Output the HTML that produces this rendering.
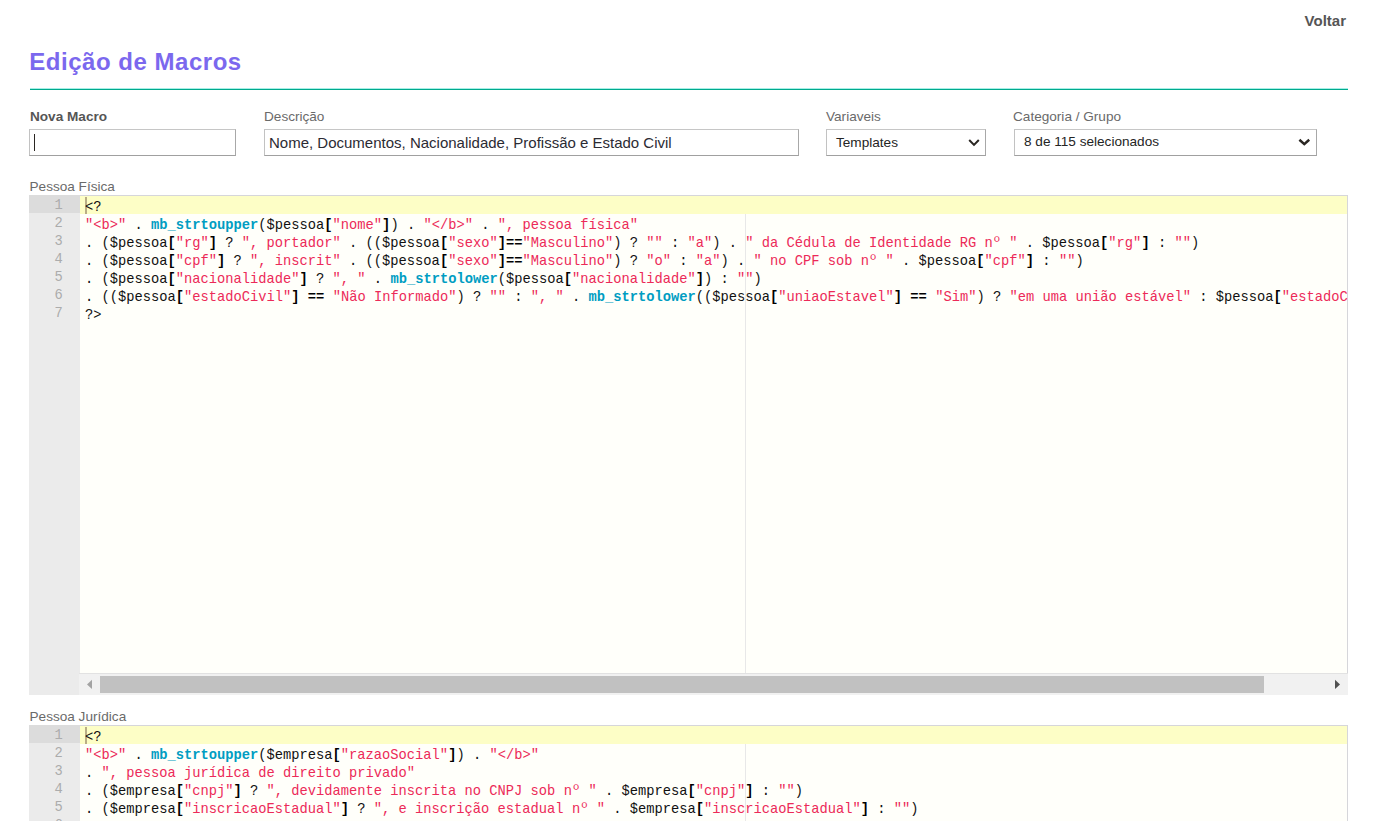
<!DOCTYPE html>
<html lang="pt-br">
<head>
<meta charset="utf-8">
<title>Edição de Macros</title>
<style>
*{box-sizing:border-box;margin:0;padding:0}
html,body{width:1378px;height:821px;overflow:hidden;background:#fff}
body{position:relative;font-family:"Liberation Sans",sans-serif;color:#666}
.abs{position:absolute;white-space:nowrap}
#voltar{right:32px;top:12px;font-size:15px;line-height:18px;font-weight:bold;color:#555}
#title{left:29.3px;top:47px;font-size:24px;letter-spacing:.52px;line-height:30px;font-weight:bold;color:#7b68ee}
#rule1{left:30px;top:88px;width:1318px;height:1px;background:#a6efe7}
#rule2{left:30px;top:89px;width:1318px;height:1px;background:#00aa8d}
.lbl{font-size:13.6px;line-height:16px;color:#6a6a6a}
.lbl.b{font-weight:bold;color:#555}
.inp{top:129px;height:27px;border:1px solid;border-color:#c6c6c6 #a8a8a8 #a0a0a0 #c2c2c2;background:#fff;color:#2b2b33}
.inp span{position:absolute;white-space:nowrap}
.chev{position:absolute}
/* editor */
.ed{left:29px;width:1319px;height:500px;background:#fffffa;overflow:hidden;
 font-family:"Liberation Mono",monospace;font-size:13.75px;line-height:18px;color:#111}
.gut{position:absolute;left:0;top:0;width:51px;height:100%;background:#ebebeb;color:#acacac;text-align:right;padding-top:2px}
.gut div{height:18px;padding-right:17.25px;position:relative}
.gact{position:absolute;left:0;top:0;width:51px;height:18px;background:#dcdcdc}
.bt{position:absolute;left:51px;right:0;top:0;height:1px;background:#d6d6da}
.br{position:absolute;right:0;top:0;width:1px;height:100%;background:#d6d6da}
.actl{position:absolute;left:51px;right:1px;top:1px;height:18px;background:#fdfec6}
.pm{position:absolute;left:716px;top:19px;width:1px;height:100%;background:#e8e8e8}
.cur{position:absolute;left:56px;top:2px;width:2px;height:17px;background:#b9ae86}
.code{position:absolute;left:56px;top:4px;white-space:pre}
.code div{height:18px}
.s{color:#ec2a58}
.f{color:#009dc2;font-weight:bold}
.k{font-weight:bold;color:#000}
.hs{position:absolute;left:50px;right:0;bottom:0;height:22px;background:#f1f1f1;border-top:1px solid #e2e2e2}
.hs .th{position:absolute;left:21px;top:2px;height:17px;width:1164px;background:#c1c1c1}
.hs svg{position:absolute;top:0}
</style>
</head>
<body>
<div class="abs" id="voltar">Voltar</div>
<div class="abs" id="title">Edição de Macros</div>
<div class="abs" id="rule1"></div>
<div class="abs" id="rule2"></div>

<div class="abs lbl b" style="left:30px;top:109px">Nova Macro</div>
<div class="abs lbl" style="left:264px;top:109px">Descrição</div>
<div class="abs lbl" style="left:826px;top:109px">Variaveis</div>
<div class="abs lbl" style="left:1013px;top:109px">Categoria / Grupo</div>

<div class="abs inp" style="left:29px;width:207px"><span style="left:4px;top:4px;width:1px;height:17px;background:#2a2622"></span></div>
<div class="abs inp" style="left:264px;width:535px"><span style="left:4px;top:3px;font-size:15px;line-height:20px">Nome, Documentos, Nacionalidade, Profissão e Estado Civil</span></div>
<div class="abs inp" style="left:826px;width:160px"><span style="left:9px;top:4px;font-size:13.6px;line-height:17px;color:#242424">Templates</span>
 <svg class="chev" style="left:141px;top:8px" width="14" height="10" viewBox="0 0 14 10"><path d="M1.2 2 L6 6.9 L10.8 2" fill="none" stroke="#2a2622" stroke-width="2"/></svg></div>
<div class="abs inp" style="left:1014px;width:303px"><span style="left:9px;top:3px;font-size:13.6px;line-height:17px;color:#242424">8 de 115 selecionados</span>
 <svg class="chev" style="left:283px;top:8px" width="14" height="10" viewBox="0 0 14 10"><path d="M1.4 1.7 L6.3 6.1 L11.2 1.7" fill="none" stroke="#2a2622" stroke-width="2.5"/></svg></div>

<div class="abs lbl" style="left:29.5px;top:179px">Pessoa Física</div>
<div class="abs ed" style="top:195px">
 <div class="gut"><i class="gact"></i><div>1</div><div>2</div><div>3</div><div>4</div><div>5</div><div>6</div><div>7</div></div>
 <div class="pm"></div><div class="bt"></div><div class="br"></div>
 <div class="actl"></div>
 <div class="cur"></div>
 <div class="code"><div>&lt;?</div><div><span class="s">"&lt;b&gt;"</span> . <span class="f">mb_strtoupper</span>($pessoa<span class="k">[</span><span class="s">"nome"</span><span class="k">]</span>) . <span class="s">"&lt;/b&gt;"</span> . <span class="s">", pessoa física"</span></div><div>. ($pessoa<span class="k">[</span><span class="s">"rg"</span><span class="k">]</span> ? <span class="s">", portador"</span> . (($pessoa<span class="k">[</span><span class="s">"sexo"</span><span class="k">]==</span><span class="s">"Masculino"</span>) ? <span class="s">""</span> : <span class="s">"a"</span>) . <span class="s">" da Cédula de Identidade RG nº "</span> . $pessoa<span class="k">[</span><span class="s">"rg"</span><span class="k">]</span> : <span class="s">""</span>)</div><div>. ($pessoa<span class="k">[</span><span class="s">"cpf"</span><span class="k">]</span> ? <span class="s">", inscrit"</span> . (($pessoa<span class="k">[</span><span class="s">"sexo"</span><span class="k">]==</span><span class="s">"Masculino"</span>) ? <span class="s">"o"</span> : <span class="s">"a"</span>) . <span class="s">" no CPF sob nº "</span> . $pessoa<span class="k">[</span><span class="s">"cpf"</span><span class="k">]</span> : <span class="s">""</span>)</div><div>. ($pessoa<span class="k">[</span><span class="s">"nacionalidade"</span><span class="k">]</span> ? <span class="s">", "</span> . <span class="f">mb_strtolower</span>($pessoa<span class="k">[</span><span class="s">"nacionalidade"</span><span class="k">]</span>) : <span class="s">""</span>)</div><div>. (($pessoa<span class="k">[</span><span class="s">"estadoCivil"</span><span class="k">]</span> <span class="k">==</span> <span class="s">"Não Informado"</span>) ? <span class="s">""</span> : <span class="s">", "</span> . <span class="f">mb_strtolower</span>(($pessoa<span class="k">[</span><span class="s">"uniaoEstavel"</span><span class="k">]</span> <span class="k">==</span> <span class="s">"Sim"</span>) ? <span class="s">"em uma união estável"</span> : $pessoa<span class="k">[</span><span class="s">"estadoCivil"</span><span class="k">]</span>)) : <span class="s">""</span>)</div><div>?&gt;</div></div>
 <div class="hs"><div class="th"></div>
  <svg style="left:1px" width="20" height="21" viewBox="0 0 20 21"><path d="M12 5.8 L7 10.4 L12 15 Z" fill="#a3a3a3"/></svg>
  <svg style="right:0" width="20" height="21" viewBox="0 0 20 21"><path d="M7 5.8 L12 10.4 L7 15 Z" fill="#505050"/></svg>
 </div>
</div>

<div class="abs lbl" style="left:29.5px;top:709px">Pessoa Jurídica</div>
<div class="abs ed" style="top:725px">
 <div class="gut"><i class="gact"></i><div>1</div><div>2</div><div>3</div><div>4</div><div>5</div><div>6</div><div>7</div></div>
 <div class="pm"></div><div class="bt"></div><div class="br"></div>
 <div class="actl"></div>
 <div class="cur"></div>
 <div class="code"><div>&lt;?</div><div><span class="s">"&lt;b&gt;"</span> . <span class="f">mb_strtoupper</span>($empresa<span class="k">[</span><span class="s">"razaoSocial"</span><span class="k">]</span>) . <span class="s">"&lt;/b&gt;"</span></div><div>. <span class="s">", pessoa jurídica de direito privado"</span></div><div>. ($empresa<span class="k">[</span><span class="s">"cnpj"</span><span class="k">]</span> ? <span class="s">", devidamente inscrita no CNPJ sob nº "</span> . $empresa<span class="k">[</span><span class="s">"cnpj"</span><span class="k">]</span> : <span class="s">""</span>)</div><div>. ($empresa<span class="k">[</span><span class="s">"inscricaoEstadual"</span><span class="k">]</span> ? <span class="s">", e inscrição estadual nº "</span> . $empresa<span class="k">[</span><span class="s">"inscricaoEstadual"</span><span class="k">]</span> : <span class="s">""</span>)</div><div></div></div>
</div>
</body>
</html>
